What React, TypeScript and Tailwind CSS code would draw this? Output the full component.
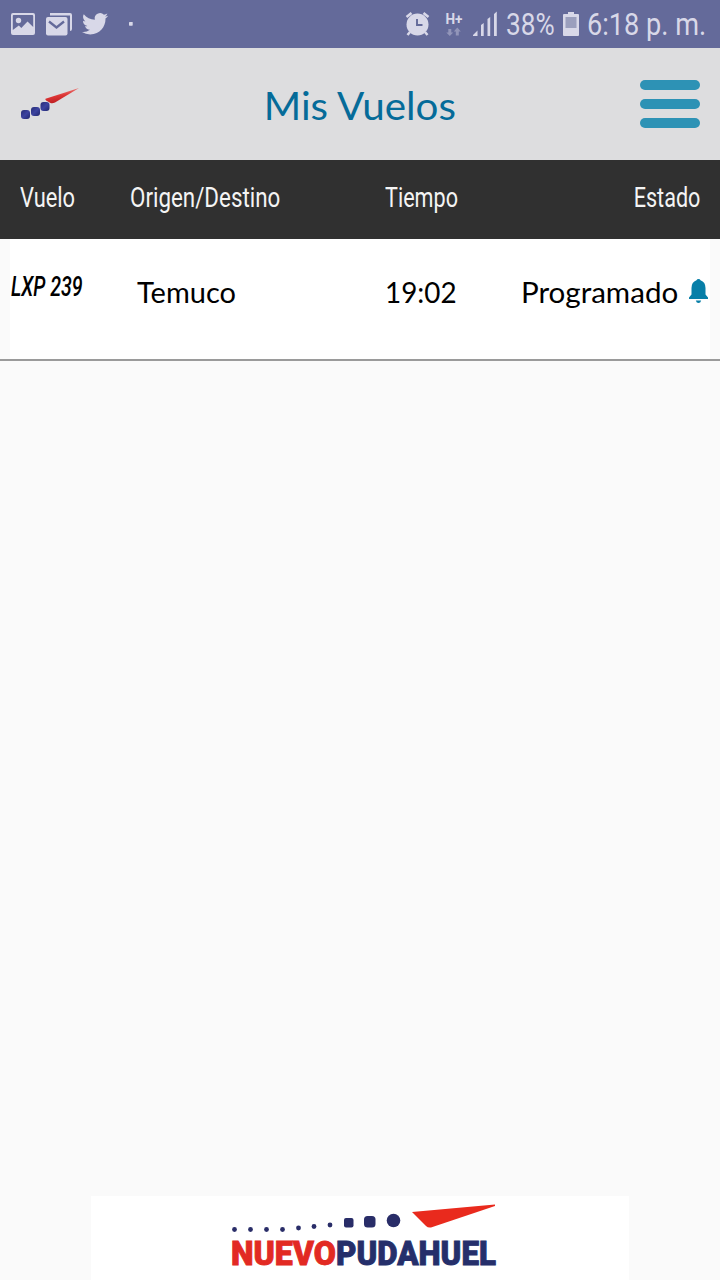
import type { ReactNode } from "react";

function StatusBar() {
  return (
    <div className="flex h-12 items-center bg-[#646a9a] text-[#d8d8e8]">
      <svg className="h-12 w-[140px] shrink-0" viewBox="0 0 140 48" fill="currentColor">
        <path
          fillRule="evenodd"
          d="M13 13h20q2 0 2 2v18q0 2-2 2H13q-2 0-2-2V15q0-2 2-2ZM13.500 15q-.7 0-.7 1v14l6-4.500 2.500 2.500 6.200-6.500 5.700 5.500V16q0-1-1-1Z"
        />
        <circle cx="18.500" cy="20.500" r="2.700" />
        <path d="M50 13h20q2 0 2 2v14q0 2-2 2V15.500H50Z" />
        <rect x="46" y="17" width="21.500" height="18.500" rx="2" />
        <path d="m49 21.500 7.500 6 7.500-6" fill="none" stroke="#646a9a" strokeWidth="2.300" />
        <path
          transform="translate(82 10.700) scale(1.090)"
          d="M23.950 4.570a10 10 0 0 1-2.820.770 4.960 4.960 0 0 0 2.160-2.720c-.950.550-2 .950-3.130 1.180a4.920 4.920 0 0 0-8.380 4.480C7.690 8.090 4.070 6.130 1.640 3.160a4.820 4.820 0 0 0-.670 2.480c0 1.710.870 3.210 2.190 4.100a4.900 4.900 0 0 1-2.230-.620v.060a4.920 4.920 0 0 0 3.950 4.830 5 5 0 0 1-2.210.080 4.940 4.940 0 0 0 4.600 3.420A9.870 9.870 0 0 1 0 19.540a13.990 13.990 0 0 0 7.560 2.210c9.050 0 14-7.500 14-13.980 0-.210 0-.420-.020-.630a9.940 9.940 0 0 0 2.460-2.550Z"
        />
        <rect x="129" y="22" width="3.700" height="3.700" rx=".6" />
      </svg>
      <div className="flex-1" />
      <svg className="h-12 w-[98px] shrink-0" viewBox="402 0 98 48" fill="currentColor">
        <circle cx="417.500" cy="24.500" r="11" />
        <path
          d="m406.500 17 5-4M428.500 17l-5-4M410 32l-2.500 3M425 32l2.500 3"
          stroke="currentColor"
          strokeWidth="2.500"
        />
        <path d="M417 19v6h5.500" fill="none" stroke="#646a9a" strokeWidth="1.900" />
        <text
          x="445.500"
          y="24"
          fontFamily="Roboto, sans-serif"
          fontSize="14.500"
          fontWeight="700"
          textLength="17"
          lengthAdjust="spacingAndGlyphs"
        >
          H+
        </text>
        <path opacity=".4" d="M448.300 29h3v3.500h2l-3.500 3.500-3.500-3.500h2ZM455.800 35.500v-4h-2l3.500-4 3.500 4h-2v4Z" />
        <path d="M473 36v-1l4.500-4.500V36ZM481 36V25l2.700-2v13ZM487.500 36V19l2.700-2v19ZM494 36V14l2.800-2.500V36Z" />
      </svg>
      <div className="w-[63px] shrink-0 pl-1.5 pt-0.5 font-[Roboto,sans-serif] text-[31px] leading-9">
        <span className="inline-block origin-left scale-x-[0.845] whitespace-nowrap">38%</span>
      </div>
      <svg className="h-12 w-4 shrink-0" viewBox="0 0 16 48" fill="currentColor">
        <path d="M5 12h6v2h4q1 0 1 1v20q0 1-1 1H1q-1 0-1-1V15q0-1 1-1h4Z" />
        <path d="M2.500 17h11v11h-11Z" fill="#9b9fbd" />
      </svg>
      <div className="w-[141px] shrink-0 pl-2 pt-0.5 font-[Roboto,sans-serif] text-[31px] leading-9">
        <span className="inline-block origin-left scale-x-[0.875] whitespace-nowrap">6:18 p. m.</span>
      </div>
    </div>
  );
}

function AirportMark() {
  return (
    <svg className="h-10 w-[60px]" viewBox="20 84 60 40">
      <defs>
        <linearGradient id="tail" x1="0.300" y1="0.100" x2="0.550" y2="0.900">
          <stop offset="0" stopColor="#f08a88" />
          <stop offset=".5" stopColor="#dd3535" />
          <stop offset="1" stopColor="#bd1e22" />
        </linearGradient>
        <linearGradient id="dot" x1="0" y1="0" x2="1" y2="1">
          <stop offset="0" stopColor="#272d75" />
          <stop offset=".5" stopColor="#3c43a0" />
          <stop offset="1" stopColor="#20266d" />
        </linearGradient>
      </defs>
      <path d="M79 88 45.500 98.700q-.7 1 1 2l4 2.300q2 .8 4.500-.5Z" fill="url(#tail)" />
      <rect x="21" y="110" width="9" height="9" rx="3" fill="url(#dot)" />
      <rect x="31" y="107" width="9" height="9" rx="3" fill="url(#dot)" />
      <rect x="40.500" y="102" width="9" height="9" rx="3" fill="url(#dot)" />
    </svg>
  );
}

function Header() {
  return (
    <header className="flex h-28 items-center justify-between bg-[#dddddf] px-5">
      <AirportMark />
      <h1 className="whitespace-nowrap pt-0.5 font-[Lato,sans-serif] text-[39px] leading-[48px] text-[#056b99]">
        <span className="inline-block scale-x-[1.035]">Mis Vuelos</span>
      </h1>
      <button className="flex w-[60px] flex-col gap-[9px]" aria-label="Menú">
        <span className="h-2.5 rounded-full bg-[#2d92b5]" />
        <span className="h-2.5 rounded-full bg-[#2d92b5]" />
        <span className="h-2.5 rounded-full bg-[#2d92b5]" />
      </button>
    </header>
  );
}

function Cell({ className, children }: { className: string; children: ReactNode }) {
  return <div className={"shrink-0 whitespace-nowrap " + className}>{children}</div>;
}

function FlightTable() {
  return (
    <section>
      <div className="flex h-[79px] bg-[#303030] px-5 pt-5 font-[Roboto,sans-serif] text-[27px] leading-9 text-[#f4f4f4]">
        <Cell className="w-[110px]">
          <span className="inline-block origin-left scale-x-[0.81]">Vuelo</span>
        </Cell>
        <Cell className="w-[255px]">
          <span className="inline-block origin-left scale-x-[0.828]">Origen/Destino</span>
        </Cell>
        <Cell className="w-[115px]">
          <span className="inline-block origin-left scale-x-[0.80]">Tiempo</span>
        </Cell>
        <Cell className="w-[200px] text-right">
          <span className="inline-block origin-right scale-x-[0.80]">Estado</span>
        </Cell>
      </div>
      <div className="border-b-2 border-[#9a9a9a] px-2.5">
        <div className="flex h-[120px] bg-white font-[Lato,sans-serif] text-[29px] leading-9 text-black">
          <Cell className="w-[127px] pl-px pt-[30px] font-[Roboto,sans-serif] text-[28px] font-medium italic">
            <span className="inline-block origin-left scale-x-[0.70]">LXP 239</span>
          </Cell>
          <Cell className="w-[248px] pt-[35px]">
            <span className="inline-block origin-left">Temuco</span>
          </Cell>
          <Cell className="w-[125px] pt-[35px]">
            <span className="inline-block origin-left scale-x-[0.96]">19:02</span>
          </Cell>
          <Cell className="w-[168px] pt-[35px] text-right">
            <span className="inline-block origin-right scale-x-[1.02]">Programado</span>
          </Cell>
          <svg className="ml-[11px] mt-10 h-6 w-[19px] shrink-0" viewBox="0 0 19 24" fill="#087fa8">
            <path d="M9.500 0q1.500 0 2 1.200Q16.500 3 16.500 9v6.500l2.500 3v1.500H0v-1.500l2.500-3V9q0-6 5-7.800Q8 0 9.500 0ZM6.800 21.500h5.400Q11.500 24 9.500 24t-2.700-2.500Z" />
          </svg>
        </div>
      </div>
    </section>
  );
}

const trailDots = [
  [234.5, 1229.5],
  [250.5, 1229.5],
  [266.5, 1229.5],
  [282.5, 1229.5],
  [298.5, 1228],
  [314, 1226.5],
  [330, 1225],
];

function Sponsor() {
  return (
    <footer className="mx-auto h-[84px] w-[538px] bg-white">
      <svg className="h-full w-full" viewBox="91 1196 538 84">
        <g fill="#292d68">
          {trailDots.map(([x, y]) => (
            <circle key={x} cx={x} cy={y} r="2.400" />
          ))}
          <rect x="344" y="1218" width="9.500" height="9.500" rx="2" />
          <rect x="364" y="1216" width="11.500" height="11.500" rx="3.500" />
          <circle cx="393.500" cy="1220.500" r="6.800" />
        </g>
        <path d="M412 1212 495 1204.500v1.500l-64 21.500q-3 .5-5-1.500Z" fill="#e92a1d" />
        <g fontFamily="Roboto, sans-serif" fontSize="34" fontWeight="900" strokeWidth="0.900">
          <text x="231" y="1265" fill="#e22a23" stroke="#e22a23" textLength="105" lengthAdjust="spacingAndGlyphs">
            NUEVO
          </text>
          <text x="336" y="1265" fill="#252f6b" stroke="#252f6b" textLength="160" lengthAdjust="spacingAndGlyphs">
            PUDAHUEL
          </text>
        </g>
      </svg>
    </footer>
  );
}

export default function App() {
  return (
    <div className="flex h-[1280px] w-[720px] flex-col overflow-hidden bg-[#fafafa]">
      <StatusBar />
      <Header />
      <FlightTable />
      <main className="flex-1" />
      <Sponsor />
    </div>
  );
}
